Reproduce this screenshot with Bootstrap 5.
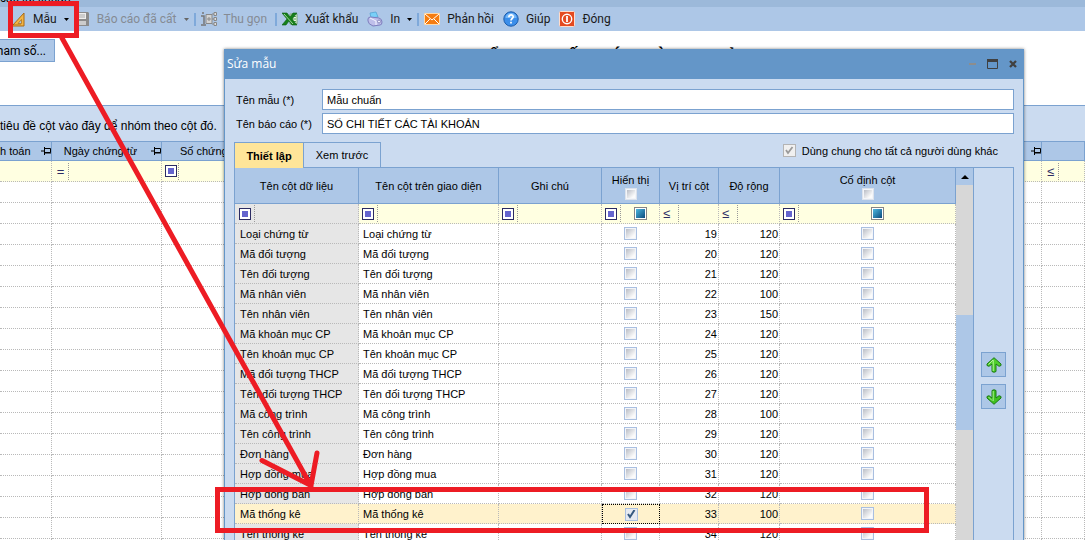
<!DOCTYPE html>
<html lang="vi">
<head>
<meta charset="utf-8">
<meta name="viewport" content="width=device-width, initial-scale=1">
<title>Sửa mẫu</title>
<link href="https://cdn.jsdelivr.net/npm/bootstrap@5.3.0/dist/css/bootstrap.min.css" rel="stylesheet">
<style>
:root{--line:#7ba2d0;--head:#adc7e7;--pane:#cbdbf0;--dots:#b9b9b9;--filter:#ffffe1}
body{font-family:"Liberation Sans",Arial,sans-serif;font-size:11px;line-height:16px;color:#000;height:100vh}
button,input{font:inherit;color:inherit}
.caption-strip{height:7px;background:#9cb9da}
.caption-strip span{margin-top:-10px;font-size:12px}
.toolbar{height:24px;background:var(--head);font-family:Roboto,"Noto Sans",sans-serif;font-size:12px;padding-left:10px}
.tool{border:0;background:none;padding:0;gap:7px;line-height:16px;color:#1a1a1a}
.tool + .tool{margin-left:9px}
.tool:disabled{color:#858b94}
.tool:first-child + .tool{margin-left:5px}
.tool svg{width:16px;height:16px}
.tool svg.arrow{width:5px;height:3px}
.sep{width:2px;height:13px;margin:0 5px;background:#7fa9da}
.param-btn{border:1px solid var(--line);background:var(--head);height:23px;width:55px;padding:0 8px 0 0;font-family:Roboto,sans-serif;font-size:12px;line-height:16px;border-left:0}
.report-title{font:bold 19px/24px "Liberation Serif",serif;padding:6px 0 0 88px}
.work-area{padding-top:8px;height:74px}
.group-hint{background:var(--pane);border-top:1px solid var(--line);height:36px;font-size:12px;padding-top:5px}
.grid{width:100%;table-layout:fixed;border-collapse:separate;border-spacing:0}
.grid th,.grid td{padding:0;overflow:hidden;white-space:nowrap}
.grid th{font-weight:400;background:var(--head);border-right:1px solid var(--line);border-bottom:1px solid var(--line)}
.grid td{background:#fff;border-right:1px dotted var(--dots);border-bottom:1px dotted var(--dots)}
.back th{height:20px;border-top:1px solid var(--line);line-height:16px}
.back td{height:21px}
.back .c-cut{width:52px}.back .c-main{width:110px}.back .c-end{width:43px}
.back th span{gap:2px}
.back .op{margin-left:1px}
.grid .filters td{background:var(--filter)}
.op{height:17px;width:16px;border-right:1px dotted #999;color:#2b2b63;font-size:13px;line-height:17px}
.sq{width:12px;height:12px;border:1px solid #2b2b63;background:#fff;padding:2px}
.sq i{display:block;width:6px;height:6px;background:#6464cd}
.win{position:absolute;top:49px;left:224px;right:61px;bottom:0;background:var(--pane);border:solid #6496c8;border-width:0 1px;box-shadow:0 0 3px rgba(0,0,0,.5)}
.win-title{height:30px;background:#6496c8;color:#fff;font-family:"Open Sans",sans-serif;font-size:12px;padding:0 4px 0 2px}
.win-title button{border:0;background:none;padding:0;width:12px;height:12px;line-height:0}
.win-body{padding:10px 9px 0}
.field{height:21px}
.field + .field{margin-top:3px}
.field label{width:88px;padding-left:2px}
.field input{border:1px solid var(--line);background:#fff;height:21px;padding:0 4px;border-radius:0;min-width:0}
.tabs{height:25px}
.tabs button{border:1px solid var(--line);border-bottom:0;padding:0;height:25px;background:var(--pane)}
.tabs .on{width:70px;background:#ffe599;font-weight:700;height:26px}
.tabs .off{width:77px;border-left:0}
.tabs label{gap:6px}
.sheet{border:1px solid var(--line);border-bottom:0}
.inner th{height:36px;line-height:16px;vertical-align:middle}
.inner td{height:20px;line-height:16px}
.inner tr td:nth-child(1),.inner .filters td:nth-child(1){background:#e6e6e6}
.inner .c1{width:124px}.inner .c2{width:140px}.inner .c3{width:103px}.inner .c4{width:58px}.inner .c5{width:59px}.inner .c6{width:61px}
.inner tbody td{padding-left:4px}
.inner tbody td.num{padding:0 1px 0 0;text-align:right}
.inner tbody td.mid{padding:0;text-align:center}
.inner tbody td:nth-child(1){padding-left:5px}
.inner tbody tr.picked td{background:#fff2cc}
.inner tr.picked td.focus{border:1px dotted #000}
.inner tbody .filters td{padding-left:3px}
.inner tbody .filters td:nth-child(1){padding-left:4px}
.tick{appearance:none;display:block;margin:0 auto;width:13px;height:13px;padding:1px;border:1px solid #a9bfe0;background:linear-gradient(135deg,#b9bdc6,#fbfbfb 80%) content-box,#f3f5f9;border-radius:0}
.tick:checked{background:#e6eaf1}
.tick:disabled{border-color:#b4b4b4;background:#f0f0f0}
.tick-wrap{position:relative;width:13px;height:13px}
.tick-wrap svg{position:absolute;left:2px;top:2px;pointer-events:none}
th .tick{width:12px;height:12px;border-color:#dde3ec}
.tick.tri{margin:0;border:1px solid #858585;background:linear-gradient(135deg,#4db8e0,#0b4a7c) content-box,#fff}
.scroll{flex:0 0 17px;background:#d7d7d7}
.scroll .up{height:17px;background:var(--head);border:0;padding:0;line-height:0}
.scroll .thumb{height:115px;margin-top:130px;background:var(--head)}
.side{flex:0 0 40px;border-left:1px solid var(--line);padding:184px 0 0 7px;gap:7px}
.side button{width:25px;height:25px;padding:0;border:1px solid var(--line);background:var(--head);line-height:0}
.marks{position:absolute;left:0;top:0;width:930px;height:540px;pointer-events:none}
</style>
</head>
<body class="position-relative overflow-hidden bg-white">

<div class="caption-strip overflow-hidden d-flex"><span>các tài khoản</span></div>

<nav class="toolbar d-flex align-items-center" aria-label="Thanh công cụ">
  <button class="tool d-flex align-items-center">
    <svg viewBox="0 0 16 16"><path d="M2 15 14 2v13z" fill="#f3b443" stroke="#a96b16"/><path d="M8 12.500 11.500 8.500v4z" fill="#adc7e7" stroke="#a96b16" stroke-width=".7"/><path d="M4 13v1m2-1v1m2-1v1m2-1v1" stroke="#6d4408" stroke-width=".6"/></svg>
    <span>Mẫu</span><svg class="arrow" viewBox="0 0 5 3"><path d="M0 0h5L2.500 3z"/></svg></button>
  <button class="tool d-flex align-items-center" disabled>
    <svg viewBox="0 0 16 16"><path d="M1 1h13l1 1v13H1z" fill="#8b8b8b"/><path d="M3 2h9v6H3z" fill="#eee"/><path d="M4 10h8v4H4z" fill="#ccc"/><path d="M5 4h6M5 6h6" stroke="#aaa"/></svg>
    <span>Báo cáo đã cất</span><svg class="arrow" viewBox="0 0 5 3"><path d="M0 0h5L2.500 3z" fill="#666"/></svg></button>
  <span class="sep"></span>
  <button class="tool d-flex align-items-center" disabled>
    <svg viewBox="0 0 16 16"><path d="M0 5h3v8m-3 1h5M2 1v2" fill="none" stroke="#777" stroke-width="1.500"/><path d="M5 3.500h6v9H5z" fill="#d4d4d4" stroke="#888"/><path d="M6 8h4M8 6v4M11 3h2M11 8h2M11 13h2" stroke="#888"/><path d="M13 1.500h2.500v3H13zM13 6.500h2.500v3H13zM13 11.500h2.500v3H13z" fill="#ddd" stroke="#888"/></svg>
    <span>Thu gọn</span></button>
  <span class="sep ms-2"></span>
  <button class="tool d-flex align-items-center">
    <svg viewBox="0 0 16 16"><path d="M8 3h7v10H8z" fill="#e4f3df" stroke="#78a878"/><path d="M10 5.500h4m-4 2.500h4m-4 2.500h4" stroke="#56a356"/><path d="M0 2h5l3 4 3-4h4l-5 6 5 6h-5l-3-4-3 4H0l5-6z" fill="#16801b" stroke="#0c5c12" stroke-width=".6"/><path d="m2 3 9 10" stroke="#a3d89b"/></svg>
    <span>Xuất khẩu</span></button>
  <button class="tool d-flex align-items-center">
    <svg viewBox="0 0 16 16"><path d="m3 2 6-1 2 5-7 1z" fill="#79d0f8" stroke="#4d9fd0" stroke-width=".7"/><path d="M1 8q0-2 3-2l8 1q3 1 3 4t-2 3l-7 1q-5-2-5-5z" fill="#bfbfea" stroke="#7d7dbd"/><path d="m3 7 6 3v4" fill="none" stroke="#f5f5ff"/><circle cx="12" cy="10.500" r="1.500" fill="#eef" stroke="#88b"/></svg>
    <span>In</span><svg class="arrow" viewBox="0 0 5 3"><path d="M0 0h5L2.500 3z"/></svg></button>
  <span class="sep"></span>
  <button class="tool d-flex align-items-center">
    <svg viewBox="0 0 16 16"><path d="M.5 2.500h15v11H.5z" fill="#f57c10" stroke="#ffd9a8"/><path d="m1 3 7 6 7-6M1 13l5-5m9 5-5-5" fill="none" stroke="#fff"/></svg>
    <span>Phản hồi</span></button>
  <button class="tool d-flex align-items-center">
    <svg viewBox="0 0 16 16"><circle cx="8" cy="8" r="7.200" fill="#3b8eea" stroke="#1c5cab"/><path d="M2.500 7a5.500 5 0 0 1 11 0z" fill="#75b7f8"/><path d="M5.800 6.200c0-3 4.400-3 4.400-.4C10.200 7.500 8 7.500 8 9.500m0 1.300v1.700" fill="none" stroke="#fff" stroke-width="1.700"/></svg>
    <span>Giúp</span></button>
  <button class="tool d-flex align-items-center">
    <svg viewBox="0 0 16 16"><rect x=".5" y=".5" width="15" height="15" rx="1" fill="#e44a20" stroke="#ffdccb"/><circle cx="8" cy="8" r="4.700" fill="none" stroke="#fff" stroke-width="1.400"/><path d="M8 5v6" stroke="#fff" stroke-width="1.800"/></svg>
    <span>Đóng</span></button>
</nav>

<main>
  <div class="work-area d-flex align-items-start">
    <button class="param-btn d-flex justify-content-end align-items-center text-nowrap">ham số...</button>
    <h1 class="report-title flex-grow-1 text-center m-0">SỔ CHI TIẾT CÁC TÀI KHOẢN</h1>
  </div>
  <div class="group-hint d-flex align-items-center">tiêu đề cột vào đây để nhóm theo cột đó.</div>
  <table class="grid back">
    <colgroup><col class="c-cut"><col class="c-main"><col class="c-main"><col><col class="c-end"></colgroup>
    <thead><tr>
      <th><span class="d-flex align-items-center justify-content-between">h toán <svg width="10" height="8"><path d="M0 4h3M3.500 0v8M3 1.500h6.500v4H3M3 6h7" fill="none" stroke="#000"/></svg></span></th>
      <th><span class="d-flex align-items-center justify-content-between"><b class="fw-normal flex-grow-1 text-center">Ngày chứng từ</b><svg width="10" height="8"><path d="M0 4h3M3.500 0v8M3 1.500h6.500v4H3M3 6h7" fill="none" stroke="#000"/></svg></span></th>
      <th><span class="d-flex align-items-center justify-content-between"><b class="fw-normal flex-grow-1 text-center">Số chứng từ</b><svg width="10" height="8"><path d="M0 4h3M3.500 0v8M3 1.500h6.500v4H3M3 6h7" fill="none" stroke="#000"/></svg></span></th>
      <th><span class="d-flex justify-content-end"><svg width="10" height="8"><path d="M0 4h3M3.500 0v8M3 1.500h6.500v4H3M3 6h7" fill="none" stroke="#000"/></svg></span></th>
      <th></th>
    </tr></thead>
    <tbody id="backRows">
      <tr class="filters"><td></td><td><div class="op text-center">=</div></td><td><div class="op d-flex align-items-center justify-content-center"><span class="sq"><i></i></span></div></td><td></td><td><div class="op text-center">≤</div></td></tr>
    </tbody>
  </table>
</main>

<section class="win overflow-hidden" role="dialog" aria-labelledby="winTitle">
  <header class="win-title d-flex align-items-center">
    <span id="winTitle" class="flex-grow-1">Sửa mẫu</span>
    <button class="me-2" aria-label="Thu nhỏ"><svg width="12" height="12"><path d="M2 6h7" stroke="#8d8d8d" stroke-width="2"/></svg></button>
    <button class="me-2" aria-label="Phóng to"><svg width="12" height="12"><path d="M.5 1.500h10v9H.5z" fill="none" stroke="#404040"/><path d="M0 2.500h11" stroke="#404040" stroke-width="3"/></svg></button>
    <button aria-label="Đóng"><svg width="12" height="12"><path d="m3 3 6 6m0-6-6 6" stroke="#404040" stroke-width="2.300"/></svg></button>
  </header>
  <div class="win-body">
    <div class="field d-flex align-items-center"><label for="tplName">Tên mẫu (*)</label><input id="tplName" type="text" class="flex-grow-1" value="Mẫu chuẩn"></div>
    <div class="field d-flex align-items-center"><label for="repName">Tên báo cáo (*)</label><input id="repName" type="text" class="flex-grow-1" value="SỔ CHI TIẾT CÁC TÀI KHOẢN"></div>
    <div class="tabs d-flex mt-2">
      <button class="on position-relative">Thiết lập</button>
      <button class="off">Xem trước</button>
      <label class="d-flex align-items-center ms-auto me-3 mb-2" for="shared">
        <span class="tick-wrap"><input class="tick" type="checkbox" id="shared" checked disabled><svg width="9" height="9"><path d="m1 4 2 3L7.500 1" fill="none" stroke="#9a9a9a" stroke-width="1.800"/></svg></span>Dùng chung cho tất cả người dùng khác</label>
    </div>
    <div class="sheet d-flex">
      <div class="flex-grow-1">
        <table class="grid inner">
          <colgroup><col class="c1"><col class="c2"><col class="c3"><col class="c4"><col class="c5"><col class="c6"><col></colgroup>
          <thead><tr class="text-center">
            <th>Tên cột dữ liệu</th><th>Tên cột trên giao diện</th><th>Ghi chú</th>
            <th>Hiển thị<input class="tick" type="checkbox" aria-label="Hiển thị tất cả"></th>
            <th>Vị trí cột</th><th>Độ rộng</th>
            <th>Cố định cột<input class="tick" type="checkbox" aria-label="Cố định tất cả"></th>
          </tr></thead>
          <tbody id="rows">
            <tr class="filters">
              <td><div class="op d-flex align-items-center"><span class="sq"><i></i></span></div></td>
              <td><div class="op d-flex align-items-center"><span class="sq"><i></i></span></div></td>
              <td><div class="op d-flex align-items-center"><span class="sq"><i></i></span></div></td>
              <td><div class="d-flex align-items-center"><div class="op d-flex align-items-center"><span class="sq"><i></i></span></div><input class="tick tri mx-auto" type="checkbox" aria-label="Lọc hiển thị"></div></td>
              <td><div class="op">≤</div></td>
              <td><div class="op">≤</div></td>
              <td><div class="d-flex align-items-center"><div class="op d-flex align-items-center"><span class="sq"><i></i></span></div><input class="tick tri mx-auto" type="checkbox" aria-label="Lọc cố định"></div></td>
            </tr>
          </tbody>
        </table>
      </div>
      <div class="scroll d-flex flex-column">
        <button class="up" aria-label="Cuộn lên"><svg width="8" height="4"><path d="M0 4h8L4 0z"/></svg></button>
        <div class="thumb"></div>
      </div>
      <div class="side d-flex flex-column">
        <button aria-label="Chuyển lên"><svg width="16" height="16" viewBox="0 0 16 16"><path d="M8 .7 15 7v1.500l-2 .8L10 7v7.500q-2 1.500-4 0V7L3 9.300l-2-.8V7z" fill="#4fce2c" stroke="#1b7a12"/><path d="M7.200 3v11M7 3 2.500 7.500" stroke="#b6f59c" fill="none"/></svg></button>
        <button aria-label="Chuyển xuống"><svg width="16" height="16" viewBox="0 0 16 16"><path d="M8 15.300 15 9V7.500l-2-.8L10 9V1.500q-2-1.500-4 0V9L3 6.700l-2 .8V9z" fill="#3fc120" stroke="#1b7a12"/><path d="M7.200 2v10M2.500 8 6 11.500" stroke="#a9ef8e" fill="none"/></svg></button>
      </div>
    </div>
  </div>
</section>

<svg class="marks" viewBox="0 0 930 540" fill="none" stroke="#ed1c24" stroke-width="5" aria-hidden="true">
  <path d="M10.500 3.500h66v32h-66z"/>
  <path d="M62 38 311 486M262 460.500l49 25 6-32.500" stroke-linecap="round"/>
  <path d="M217.500 489.500h709v41h-709z"/>
</svg>

<script src="https://cdn.jsdelivr.net/npm/bootstrap@5.3.0/dist/js/bootstrap.bundle.min.js"></script>
<script>
const names = ['Loại chứng từ','Mã đối tượng','Tên đối tượng','Mã nhân viên','Tên nhân viên','Mã khoản mục CP','Tên khoản mục CP','Mã đối tượng THCP','Tên đối tượng THCP','Mã công trình','Tên công trình','Đơn hàng','Hợp đồng mua','Hợp đồng bán','Mã thống kê','Tên thống kê'];
const widths = {22:100, 23:150, 28:100, 33:100};
document.getElementById('rows').insertAdjacentHTML('beforeend', names.map((n, i) => {
  const pos = 19 + i, on = pos === 33;
  const mark = on ? '<svg width="9" height="9"><path d="m1 4 2 3L7.500 0" fill="none" stroke="#36597f" stroke-width="2"/></svg>' : '';
  return `<tr class="${on ? 'picked' : ''}"><td>${n}</td><td>${n}</td><td></td>
    <td class="mid ${on ? 'focus' : ''}"><div class="tick-wrap mx-auto"><input class="tick" type="checkbox" aria-label="Hiển thị ${n}" ${on ? 'checked' : ''}>${mark}</div></td>
    <td class="num">${pos}</td><td class="num">${widths[pos] || 120}</td>
    <td class="mid"><input class="tick" type="checkbox" aria-label="Cố định ${n}"></td></tr>`;
}).join(''));
document.getElementById('backRows').insertAdjacentHTML('beforeend', '<tr><td></td><td></td><td></td><td></td><td></td></tr>'.repeat(18));
</script>
</body>
</html>
